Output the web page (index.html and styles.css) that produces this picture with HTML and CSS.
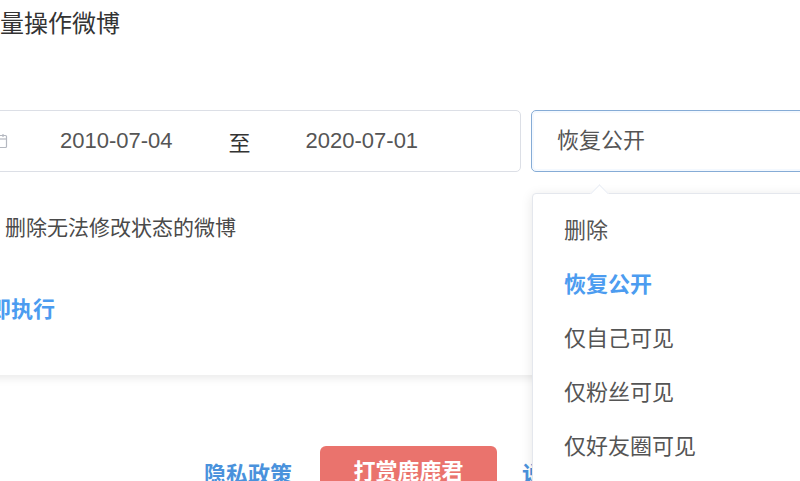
FILE: index.html
```html
<!DOCTYPE html>
<html>
    <head>
        <title>批量操作微博</title>
        <link rel="stylesheet" href="styles.css">
    </head>
    <body>
        <div class="page">
            <h2 class="title">批量操作微博</h2>

            <div class="card">
                <div class="form-row">
                    <div class="date-range">
                        <svg class="cal-icon" width="16" height="16" viewBox="0 0 16 16">
                            <rect x="1.5" y="2.5" width="13" height="12" rx="1" fill="none" stroke="#b4b8c0" stroke-width="1.2"/>
                            <line x1="1.5" y1="6" x2="14.5" y2="6" stroke="#b4b8c0" stroke-width="1.2"/>
                            <line x1="5" y1="1" x2="5" y2="4" stroke="#b4b8c0" stroke-width="1.2"/>
                            <line x1="11" y1="1" x2="11" y2="4" stroke="#b4b8c0" stroke-width="1.2"/>
                        </svg>
                        <span class="date-start">2010-07-04</span>
                        <span class="date-sep">至</span>
                        <span class="date-end">2020-07-01</span>
                    </div>

                    <div class="select-wrap">
                        <div class="select">恢复公开</div>

                        <!-- dropdown popper -->
                        <ul class="dropdown">
                            <li>删除</li>
                            <li class="selected">恢复公开</li>
                            <li>仅自己可见</li>
                            <li>仅粉丝可见</li>
                            <li>仅好友圈可见</li>
                        </ul>
                    </div>
                </div>

                <label class="check-row">
                    <span class="check-box"></span>
                    <span>删除无法修改状态的微博</span>
                </label>

                <div class="run-row">
                    <a class="run-btn">立即执行</a>
                </div>
            </div>

            <div class="footer">
                <a class="footer-link">隐私政策</a>
                <a class="reward-btn">打赏鹿鹿君</a>
                <a class="footer-link">说明文档</a>
            </div>
        </div>
    </body>
</html>
```

FILE: styles.css
```css
* {
    margin: 0;
    padding: 0;
    box-sizing: border-box;
}

body {
    width: 800px;
    height: 481px;
    overflow: hidden;
    background: #fff;
    font-family: "Liberation Sans", "Noto Sans CJK SC", sans-serif;
    color: #606266;
}

.page {
    margin-left: -50px;
    width: 1100px;
}

.title {
    padding: 8px 0 0 26px;
    font-size: 24px;
    line-height: 32px;
    font-weight: normal;
    color: #333;
}

.card {
    margin-top: 30px;
    padding: 40px 0 49px 26px;
    background: #fff;
    border-radius: 4px;
    box-shadow: 0 6px 10px -4px rgba(0, 0, 0, 0.1);
}

.form-row {
    display: flex;
    align-items: flex-start;
}

.date-range {
    width: 545px;
    height: 62px;
    border: 1px solid #dcdfe6;
    border-radius: 5px;
    display: flex;
    align-items: center;
    padding-left: 15px;
    font-size: 22px;
    color: #555;
}

.cal-icon {
    flex: none;
}

.date-start {
    margin-left: 52px;
}

.date-sep {
    margin-left: 56px;
    color: #333;
}

.date-end {
    margin-left: 55px;
}

.select-wrap {
    position: relative;
    margin-left: 10px;
}

.select {
    width: 320px;
    height: 62px;
    border: 1px solid #86acd6;
    border-radius: 5px;
    box-shadow: inset 0 0 0 2px rgba(64, 158, 255, 0.06);
    padding-left: 25px;
    font-size: 22px;
    line-height: 60px;
    color: #555;
}

.dropdown {
    position: absolute;
    top: 83px;
    left: 1px;
    width: 320px;
    list-style: none;
    padding: 10px 0 40px;
    background: #fff;
    border: 1px solid #e4e7ed;
    border-radius: 4px;
    box-shadow: 0 2px 12px rgba(0, 0, 0, 0.1);
    z-index: 10;
}

.dropdown::before {
    content: "";
    position: absolute;
    top: -7px;
    left: 60px;
    width: 12px;
    height: 12px;
    background: #fff;
    border-left: 1px solid #ebeef5;
    border-top: 1px solid #ebeef5;
    transform: rotate(45deg);
}

.dropdown li {
    height: 54px;
    line-height: 54px;
    padding-left: 31px;
    font-size: 22px;
    color: #555;
}

.dropdown li.selected {
    color: #4c9cf0;
    font-weight: bold;
}

.check-row {
    display: flex;
    align-items: center;
    margin-top: 42px;
    line-height: 28px;
    font-size: 21px;
    color: #4a4a4a;
}

.check-box {
    width: 18px;
    height: 18px;
    border: 1px solid #dcdfe6;
    border-radius: 2px;
    margin-right: 11px;
}

.run-row {
    margin-top: 54px;
    margin-left: -9px;
    line-height: 28px;
}

.run-btn {
    font-size: 22px;
    font-weight: bold;
    color: #4c9cf0;
}

.footer {
    display: flex;
    align-items: center;
    margin-top: 71px;
    padding-left: 254px;
    font-size: 22px;
}

.footer-link {
    color: #4a92dc;
    font-weight: bold;
}

.reward-btn {
    margin: 0 25px 0 28px;
    width: 177px;
    height: 52px;
    line-height: 52px;
    text-align: center;
    background: #ea736d;
    color: #fff;
    font-weight: bold;
    border-radius: 6px;
}
```
